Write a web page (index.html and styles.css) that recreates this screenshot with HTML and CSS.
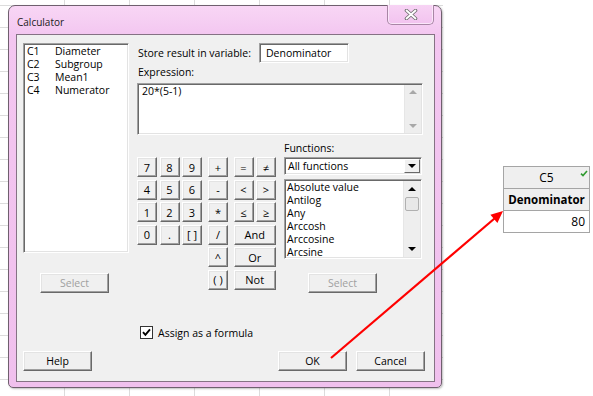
FILE: index.html
```html
<!DOCTYPE html>
<html>
<head>
<meta charset="utf-8">
<link rel="stylesheet" href="styles.css">
</head>
<body>
<div class="desk">
  <div class="backdrop">
  <div class="window">
    <div class="titlebar">
      <span class="title">Calculator</span>
      <div class="close">
        <svg width="14" height="11" viewBox="0 0 14 11">
          <path d="M2.5 1.5 L11.5 9.5 M11.5 1.5 L2.5 9.5" stroke="#707070" stroke-width="3.6" stroke-linecap="round"/>
          <path d="M2.5 1.5 L11.5 9.5 M11.5 1.5 L2.5 9.5" stroke="#ffffff" stroke-width="1.8" stroke-linecap="round"/>
        </svg>
      </div>
    </div>
    <div class="client">
      <div class="main">
        <div class="leftcol">
          <div class="varlist sunken">
            <div class="var"><span class="cn">C1</span><span>Diameter</span></div>
            <div class="var"><span class="cn">C2</span><span>Subgroup</span></div>
            <div class="var"><span class="cn">C3</span><span>Mean1</span></div>
            <div class="var"><span class="cn">C4</span><span>Numerator</span></div>
          </div>
          <button class="btn disabled sel-left">Select</button>
        </div>
        <div class="rightcol">
          <div class="store">
            <span class="store-label">Store result in variable:</span>
            <div class="input sunken">Denominator</div>
          </div>
          <div class="exlabel">Expression:</div>
          <div class="textarea sunken">
            <div class="ta-text">20*(5-1)</div>
            <div class="vscroll">
              <span class="arr up dim"></span>
              <span class="arr down dim"></span>
            </div>
          </div>
          <div class="lower">
            <div class="keypad">
              <div class="digits">
                <button class="btn key">7</button>
                <button class="btn key">8</button>
                <button class="btn key">9</button>
                <button class="btn key">4</button>
                <button class="btn key">5</button>
                <button class="btn key">6</button>
                <button class="btn key">1</button>
                <button class="btn key">2</button>
                <button class="btn key">3</button>
                <button class="btn key">0</button>
                <button class="btn key">.</button>
                <button class="btn key">[ ]</button>
              </div>
              <div class="ops">
                <button class="btn key">+</button>
                <button class="btn key">-</button>
                <button class="btn key">*</button>
                <button class="btn key">/</button>
                <button class="btn key">^</button>
                <button class="btn key">( )</button>
              </div>
              <div class="logic">
                <button class="btn key">=</button>
                <button class="btn key">≠</button>
                <button class="btn key">&lt;</button>
                <button class="btn key">&gt;</button>
                <button class="btn key">≤</button>
                <button class="btn key">≥</button>
                <button class="btn key wide">And</button>
                <button class="btn key wide">Or</button>
                <button class="btn key wide">Not</button>
              </div>
            </div>
            <div class="funcs">
              <div class="flabel">Functions:</div>
              <div class="combo sunken">
                <span class="combo-text">All functions</span>
                <span class="combo-btn"><span class="tri-down"></span></span>
              </div>
              <div class="flist sunken">
                <div class="fitems">
                  <div class="fitem">Absolute value</div>
                  <div class="fitem">Antilog</div>
                  <div class="fitem">Any</div>
                  <div class="fitem">Arccosh</div>
                  <div class="fitem">Arccosine</div>
                  <div class="fitem">Arcsine</div>
                </div>
                <div class="vscroll">
                  <span class="arr up"></span>
                  <span class="thumb"></span>
                  <span class="arr down"></span>
                </div>
              </div>
              <button class="btn disabled sel-right">Select</button>
            </div>
          </div>
        </div>
      </div>
      <div class="checkrow">
        <span class="cb">
          <svg width="11" height="11" viewBox="0 0 11 11"><path d="M2 5.2 L4.4 7.8 L9 2.4" stroke="#000" stroke-width="1.9" fill="none"/></svg>
        </span>
        <span class="cb-label">Assign as a formula</span>
      </div>
      <div class="bottom">
        <button class="btn act">Help</button>
        <button class="btn act ok">OK</button>
        <button class="btn act">Cancel</button>
      </div>
    </div>
  </div>
  </div>
  <div class="sheet">
    <div class="cell head">C5
      <svg class="tick" width="8" height="7" viewBox="0 0 8 7"><path d="M1 3.6 L3 5.6 L7 1" stroke="#2f9a2f" stroke-width="1.6" fill="none"/></svg>
    </div>
    <div class="cell head name">Denominator</div>
    <div class="cell val">80</div>
  </div>
</div>
<svg class="arrow" width="593" height="396" viewBox="0 0 593 396">
  <line x1="331" y1="358" x2="494.5" y2="218.5" stroke="#ff0000" stroke-width="2.2"/>
  <polygon points="503,211 497.4,223 490.4,214.8" fill="#ff0000"/>
</svg>
</body>
</html>
```

FILE: styles.css
```css
* { box-sizing: border-box; }
html, body { margin: 0; padding: 0; background: #ffffff; }
body {
  width: 593px;
  height: 396px;
  overflow: hidden;
  position: relative;
  font-family: "Open Sans", "Noto Sans", sans-serif;
  font-size: 10.5px;
  color: #000;
}
.desk {
  display: flex;
  align-items: flex-start;
}
.backdrop {
  width: 443px;
  height: 396px;
  padding: 5px 0 0 8px;
  background-color: #fff;
  background-image:
    repeating-linear-gradient(to right, transparent 0px, transparent 64px, #dcdcdc 64px, #dcdcdc 65px),
    repeating-linear-gradient(180deg, transparent 0px, transparent 5px, #dcdcdc 5px, #dcdcdc 6px, transparent 6px, transparent 22px);
}
.window {
  width: 434px;
  height: 383px;
  border: 1px solid #6f5f6e;
  border-radius: 7px 7px 5px 5px;
  background: linear-gradient(180deg, #f8d6f5 0px, #f3c6f0 30px, #f0c0ed 100%);
  padding: 0 6px 5px 7px;
  display: flex;
  flex-direction: column;
  box-shadow: 1px 1px 2px rgba(0,0,0,0.25);
}
.titlebar {
  height: 28px;
  display: flex;
  justify-content: space-between;
  align-items: flex-start;
}
.title {
  margin: 9px 0 0 1px;
  line-height: 14px;
  font-size: 10px;
  color: #1a1a1a;
}
.close {
  width: 47px;
  height: 20px;
  margin: -1px 1px 0 0;
  border: 1px solid #a886a5;
  border-top: none;
  border-radius: 0 0 5px 5px;
  background: linear-gradient(180deg, #f7d3f4, #f2c3ef);
  box-shadow: inset 0 -1px 0 #fbe6fa, inset 1px 0 0 #fbe6fa, inset -1px 0 0 #fbe6fa;
  display: flex;
  align-items: center;
  justify-content: center;
}
.client {
  width: 419px;
  height: 348px;
  background: #f0f0f0;
  border: 1px solid #857284;
  display: flex;
  flex-direction: column;
}
.main {
  display: flex;
  gap: 8px;
  padding: 8px 0 0 6px;
}
.leftcol {
  width: 106px;
  display: flex;
  flex-direction: column;
}
.sunken {
  background: #fff;
  border: 1px solid;
  border-color: #a0a0a0 #ffffff #ffffff #a0a0a0;
  box-shadow: inset 1px 1px 0 #696969, inset -1px -1px 0 #e3e3e3;
}
.varlist {
  height: 210px;
  padding: 1px 0 0 3px;
}
.var {
  display: flex;
  line-height: 13px;
  height: 13px;
}
.cn { width: 28px; }
.btn {
  font-family: inherit;
  font-size: 10.5px;
  color: #000;
  background: #f0f0f0;
  border: 1px solid;
  border-color: #ffffff #696969 #696969 #ffffff;
  box-shadow: inset -1px -1px 0 #a0a0a0, inset 1px 1px 0 #e3e3e3;
  padding: 0;
  margin: 0;
  height: 20px;
  line-height: 17px;
  text-align: center;
}
.disabled { color: #a0a0a0; }
.sel-left {
  width: 69px;
  margin: 20px 0 0 17px;
}
.rightcol {
  width: 286px;
  display: flex;
  flex-direction: column;
}
.store {
  display: flex;
  align-items: center;
  height: 20px;
}
.store-label {
  width: 122px;
  padding-left: 1px;
}
.input {
  width: 90px;
  height: 20px;
  line-height: 18px;
  padding-left: 6px;
}
.exlabel {
  height: 20px;
  line-height: 18px;
  padding-left: 1px;
}
.textarea {
  height: 52px;
  display: flex;
  justify-content: space-between;
}
.ta-text {
  padding: 1px 0 0 4px;
  line-height: 13px;
}
.vscroll {
  width: 17px;
  margin: 1px 1px 1px 0;
  background: #eeeeee;
  border-left: 1px solid #e6e6e6;
  display: flex;
  flex-direction: column;
  align-items: center;
  justify-content: space-between;
  padding: 5px 0;
}
.arr {
  width: 0;
  height: 0;
  border-left: 4px solid transparent;
  border-right: 4px solid transparent;
}
.arr.up { border-bottom: 4px solid #000; }
.arr.down { border-top: 4px solid #000; }
.arr.up.dim { border-bottom-color: #a8a8a8; }
.arr.down.dim { border-top-color: #a8a8a8; }
.lower {
  display: flex;
  gap: 8px;
}
.keypad {
  display: flex;
  margin-top: 22px;
  width: 139px;
}
.digits {
  display: grid;
  grid-template-columns: repeat(3, 20px);
  grid-auto-rows: 20px;
  gap: 2.5px;
  align-content: start;
}
.ops {
  display: grid;
  grid-template-columns: 20px;
  grid-auto-rows: 20px;
  row-gap: 2.5px;
  margin-left: 6px;
}
.logic {
  display: grid;
  grid-template-columns: 20px 20px;
  grid-auto-rows: 20px;
  gap: 2.5px;
  margin-left: 5.5px;
}
.key { font-size: 11px; }
.wide { grid-column: span 2; }
.funcs {
  width: 138px;
  display: flex;
  flex-direction: column;
}
.flabel {
  height: 22px;
  padding-top: 5px;
  line-height: 17px;
}
.combo {
  height: 18px;
  display: flex;
  justify-content: space-between;
  align-items: center;
  padding: 0 1px 0 3px;
}
.combo-btn {
  width: 16px;
  height: 14px;
  background: #f0f0f0;
  border: 1px solid;
  border-color: #ffffff #696969 #696969 #ffffff;
  display: flex;
  align-items: center;
  justify-content: center;
}
.tri-down {
  width: 0;
  height: 0;
  border-left: 4px solid transparent;
  border-right: 4px solid transparent;
  border-top: 4px solid #000;
}
.flist {
  margin-top: 4px;
  height: 80px;
  display: flex;
  justify-content: space-between;
}
.fitems {
  padding: 1px 0 0 2px;
}
.fitem {
  line-height: 13px;
  height: 13px;
}
.flist .vscroll {
  padding: 6px 0 6px;
  justify-content: flex-start;
}
.thumb {
  width: 14px;
  height: 14px;
  margin: 6px 0 auto;
  background: #e8e8e8;
  border: 1px solid #b0b0b0;
  border-radius: 2px;
}
.sel-right {
  width: 69px;
  margin: 14px 0 0 24px;
}
.checkrow {
  display: flex;
  align-items: center;
  height: 13px;
  margin-top: 33px;
  padding-left: 123px;
}
.cb {
  width: 13px;
  height: 13px;
  border: 1px solid #333;
  background: #fff;
  display: flex;
  align-items: center;
  justify-content: center;
}
.cb-label { margin-left: 5px; }
.bottom {
  display: flex;
  gap: 9px;
  margin-top: 12px;
  padding: 0 9px 0 6px;
}
.act { width: 69px; }
.ok { margin-left: auto; }
.sheet {
  margin: 166px 0 0 60px;
  width: 87px;
  border-top: 1px solid #a5a5a5;
  border-left: 1px solid #a5a5a5;
  display: flex;
  flex-direction: column;
}
.cell {
  height: 22px;
  line-height: 21px;
  font-size: 12px;
  border-right: 1px solid #a5a5a5;
  border-bottom: 1px solid #a5a5a5;
  text-align: center;
  position: relative;
}
.head { background: #efefef; }
.name { font-weight: bold; font-size: 11.5px; }
.val { text-align: right; padding-right: 4px; background: #fff; }
.tick { position: absolute; right: 1px; top: 3px; }
.arrow {
  position: absolute;
  left: 0;
  top: 0;
  pointer-events: none;
}
```
